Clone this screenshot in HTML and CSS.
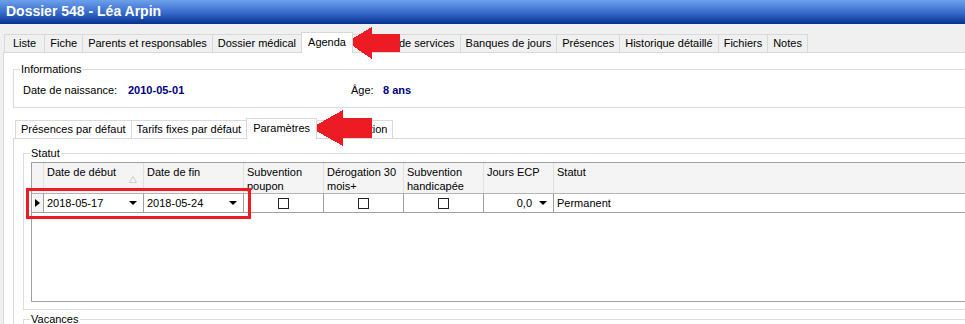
FILE: index.html
```html
<!DOCTYPE html>
<html lang="fr">
<head>
  <meta charset="UTF-8" />
  <title>Dossier 548 - Léa Arpin</title>
  <link rel="stylesheet" href="styles.css">
</head>
<body>
  <div class="titlebar">Dossier 548 - Léa Arpin</div>

  <!-- Onglets du dossier -->
  <div class="tabs">
    <span class="tab">Liste</span>
    <span class="tab">Fiche</span>
    <span class="tab">Parents et responsables</span>
    <span class="tab">Dossier médical</span>
    <span class="tab active">Agenda</span>
    <span class="tab">Entente de services</span>
    <span class="tab">Banques de jours</span>
    <span class="tab">Présences</span>
    <span class="tab">Historique détaillé</span>
    <span class="tab">Fichiers</span>
    <span class="tab">Notes</span>
  </div>

  <div class="panel">
    <fieldset class="group info">
      <legend>Informations</legend>
      <div class="info-row">
        <span>Date de naissance:</span>
        <span class="value">2010-05-01</span>
        <span>Âge:</span>
        <span class="value">8 ans</span>
      </div>
    </fieldset>

    <!-- Onglets de l'agenda -->
    <div class="tabs subtabs">
      <span class="tab">Présences par défaut</span>
      <span class="tab">Tarifs fixes par défaut</span>
      <span class="tab active">Paramètres</span>
      <span class="tab">Configuration</span>
    </div>

    <div class="subpanel">
      <fieldset class="group statut">
        <legend>Statut</legend>
        <div class="grid">
          <div class="row head">
            <div class="cell ind"></div>
            <div class="cell sorted">
              <span>Date de début</span>
              <svg class="sort" width="8" height="7" viewBox="0 0 8 7"><polygon points="4,0.5 7.5,6.5 0.5,6.5" fill="none" stroke="#cfcfcf" stroke-width="1"/></svg>
            </div>
            <div class="cell">Date de fin</div>
            <div class="cell">Subvention poupon</div>
            <div class="cell">Dérogation 30 mois+</div>
            <div class="cell">Subvention handicapée</div>
            <div class="cell">Jours ECP</div>
            <div class="cell">Statut</div>
          </div>
          <div class="row data">
            <div class="cell ind"><span class="current"></span></div>
            <div class="cell combo"><span>2018-05-17</span><span class="drop"></span></div>
            <div class="cell combo"><span>2018-05-24</span><span class="drop"></span></div>
            <div class="cell check"><span class="box"></span></div>
            <div class="cell check"><span class="box"></span></div>
            <div class="cell check"><span class="box"></span></div>
            <div class="cell combo num"><span>0,0</span><span class="drop"></span></div>
            <div class="cell">Permanent</div>
          </div>
        </div>
      </fieldset>

      <fieldset class="group vacances">
        <legend>Vacances</legend>
      </fieldset>
    </div>
  </div>

  <!-- Annotations -->
  <svg class="marks" width="965" height="324" viewBox="0 0 965 324">
    <polygon points="347,42 372,27 372,34 400,34 400,52 372,52 372,59" fill="#ed1c24"/>
    <polygon points="311,128 343,110 343,118 372,118 372,138 343,138 343,146" fill="#ed1c24"/>
  </svg>
  <div class="highlight"></div>
</body>
</html>
```

FILE: styles.css
```css
* {
  box-sizing: border-box;
}

body {
  margin: 0;
  position: relative;
  width: 965px;
  height: 324px;
  overflow: hidden;
  background: #f0f0f0;
  font-family: "Liberation Sans", Arial, sans-serif;
  font-size: 11px;
  color: #000;
}

.titlebar {
  height: 24px;
  padding-left: 6px;
  line-height: 23px;
  font-size: 14px;
  font-weight: bold;
  color: #fff;
  background: linear-gradient(#6da0ea, #3a6ecf 50%, #06328e);
}

/* onglets */
.tabs {
  display: flex;
  align-items: flex-end;
  height: 28px;
  padding-left: 5px;
}

.tab {
  height: 18px;
  line-height: 17px;
  padding: 0 5px;
  margin-left: -1px;
  border: 1px solid #d9d9d9;
  border-bottom: none;
  white-space: nowrap;
}

.tab:first-child {
  padding: 0 8px;
}

.tab.active {
  position: relative;
  z-index: 1;
  height: 21px;
  margin-bottom: -1px;
  padding: 0 6px;
  line-height: 18px;
  background: #fff;
}

.panel {
  width: 1000px;
  height: 300px;
  margin-left: 3px;
  padding-left: 9px;
  border: 1px solid #d9d9d9;
  background: #fff;
}

/* groupes */
.group {
  margin: 0;
  padding: 0;
  min-width: 0;
  border: 1px solid #dcdcdc;
}

.group legend {
  margin-left: 6px;
  padding: 0 1px;
  line-height: 13px;
}

.info {
  margin-top: 10px;
}

.info-row {
  display: grid;
  grid-template-columns: 105px 223px 32px auto;
  padding: 8px 0 10px 9px;
  line-height: 13px;
}

.value {
  font-weight: bold;
  color: #000080;
}

.subtabs {
  height: 21px;
  margin-top: 9px;
  padding-left: 3px;
}

.subtabs .tab:first-child {
  padding: 0 5px;
}

.subpanel {
  height: 200px;
  padding-left: 9px;
  border: 1px solid #d9d9d9;
  background: #fff;
}

.statut {
  margin-top: 8px;
  padding-bottom: 7px;
}

.vacances {
  margin-top: 3px;
  height: 40px;
}

/* grille */
.grid {
  height: 140px;
  margin: 2px 0 0 7px;
  border: 1px solid #a0a0a0;
  background: #fff;
}

.row {
  display: grid;
  grid-template-columns: 12px 100px 100px 80px 80px 80px 70px 1fr;
}

.row.head {
  height: 31px;
  background: #f4f4f4;
  border-bottom: 1px solid #b4b4b4;
}

.row.head .cell {
  padding: 2px 3px 0;
  line-height: 14px;
  border-right: 1px solid #e0e0e0;
}

.row.head .sorted {
  display: flex;
  justify-content: space-between;
}

.sort {
  margin: 11px 3px 0 0;
}

.row.data {
  height: 19px;
  border-bottom: 1px solid #a0a0a0;
}

.row.data .cell {
  display: flex;
  align-items: center;
  padding: 0 3px;
  line-height: 18px;
  border-right: 1px solid #a0a0a0;
}

.row.data .ind {
  background: #f4f4f4;
  border-left: 1px solid #fff;
  padding: 0 0 0 2px;
}

.current {
  border-left: 5px solid #000;
  border-top: 4px solid transparent;
  border-bottom: 4px solid transparent;
}

.row.data .combo {
  justify-content: space-between;
  padding-right: 6px;
}

.row.data .num {
  justify-content: flex-end;
  gap: 7px;
}

.drop {
  border-left: 4px solid transparent;
  border-right: 4px solid transparent;
  border-top: 4px solid #000;
}

.row.data .check {
  justify-content: center;
}

.box {
  width: 11px;
  height: 11px;
  border: 1px solid #222;
  background: #fff;
}

/* annotations */
.marks {
  position: absolute;
  top: 0;
  left: 0;
  pointer-events: none;
  shape-rendering: crispEdges;
}

.highlight {
  position: absolute;
  left: 26px;
  top: 188px;
  width: 225px;
  height: 31px;
  border: 3px solid #ed1c24;
  pointer-events: none;
}
```
